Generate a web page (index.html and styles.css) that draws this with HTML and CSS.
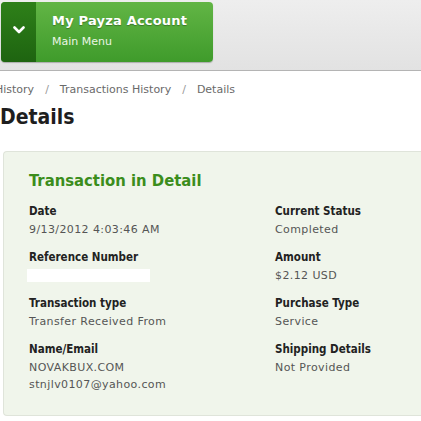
FILE: index.html
```html
<!DOCTYPE html>
<html>
<head>
<meta charset="utf-8">
<link rel="stylesheet" href="styles.css">
</head>
<body>
<header class="topbar">
  <div class="menu-btn">
    <div class="menu-toggle">
      <svg width="12" height="9" viewBox="0 0 12 9"><path d="M1.5 1.5 L6 6 L10.5 1.5" fill="none" stroke="#fff" stroke-width="2.6" stroke-linecap="round" stroke-linejoin="round"/></svg>
    </div>
    <div class="menu-text">
      <div class="menu-title">My Payza Account</div>
      <div class="menu-sub">Main Menu</div>
    </div>
  </div>
</header>
<nav class="crumbs">
  <span>History</span><span class="sep">/</span><span>Transactions History</span><span class="sep">/</span><span>Details</span>
</nav>
<h1 class="page-title">Details</h1>
<section class="card">
  <h2 class="card-title">Transaction in Detail</h2>
  <div class="grid">
    <div class="field">
      <div class="label">Date</div>
      <div class="value">9/13/2012 4:03:46 AM</div>
    </div>
    <div class="field">
      <div class="label">Current Status</div>
      <div class="value">Completed</div>
    </div>
    <div class="field">
      <div class="label">Reference Number</div>
      <div class="value"><span class="redacted"></span></div>
    </div>
    <div class="field">
      <div class="label">Amount</div>
      <div class="value">$2.12 USD</div>
    </div>
    <div class="field">
      <div class="label">Transaction type</div>
      <div class="value">Transfer Received From</div>
    </div>
    <div class="field">
      <div class="label">Purchase Type</div>
      <div class="value">Service</div>
    </div>
    <div class="field">
      <div class="label">Name/Email</div>
      <div class="value">NOVAKBUX.COM</div>
      <div class="value">stnjlv0107@yahoo.com</div>
    </div>
    <div class="field">
      <div class="label">Shipping Details</div>
      <div class="value">Not Provided</div>
    </div>
  </div>
</section>
</body>
</html>
```
FILE: styles.css
```css
html, body {
  margin: 0;
  padding: 0;
  background: #fff;
  overflow: hidden;
}
body {
  width: 421px;
  font-family: "DejaVu Sans", Verdana, sans-serif;
  color: #333;
}
.topbar {
  height: 68px;
  border-bottom: 1px solid #b4b4b4;
  background: linear-gradient(#eeeeee, #e2e2e2);
  padding: 2px 0 0 1px;
  box-sizing: content-box;
}
.menu-btn {
  width: 212px;
  height: 60px;
  display: flex;
  border-radius: 4px;
  overflow: hidden;
  background: linear-gradient(#62b545, #3f9b2b);
  box-shadow: 0 1px 1px rgba(0,0,0,0.25);
}
.menu-toggle {
  width: 35px;
  display: flex;
  align-items: center;
  justify-content: center;
  background: linear-gradient(#2e8019, #1e6410);
  padding-bottom: 3px;
  box-sizing: border-box;
}
.menu-text {
  padding: 11px 0 0 16px;
  color: #fff;
}
.menu-title {
  font-weight: bold;
  font-size: 13px;
  line-height: 16px;
  letter-spacing: 0.2px;
  text-shadow: 0 1px 1px rgba(0,0,0,0.3);
}
.menu-sub {
  font-size: 11px;
  line-height: 14px;
  margin-top: 6px;
  color: #eaf5e4;
}
.crumbs {
  margin: 12px 0 0 -5px;
  font-size: 11px;
  line-height: 14px;
  color: #6a6a6a;
  white-space: nowrap;
}
.crumbs .sep {
  margin: 0 11px;
  color: #999;
}
.page-title {
  margin: 7px 0 0 0;
  font-family: "DejaVu Sans Condensed", "DejaVu Sans", sans-serif;
  font-weight: bold;
  font-size: 21px;
  line-height: 26px;
  color: #1e1e1e;
}
.card {
  margin: 21px 0 0 3px;
  height: 265px;
  box-sizing: border-box;
  border: 1px solid #dfe4da;
  border-right: none;
  border-radius: 4px 0 0 4px;
  background: #f0f5eb;
  padding: 19px 0 0 25px;
}
.card-title {
  margin: 0;
  font-family: "DejaVu Sans Condensed", "DejaVu Sans", sans-serif;
  font-weight: bold;
  font-size: 16.5px;
  line-height: 20px;
  color: #3b8d1c;
}
.grid {
  margin-top: 11px;
  display: grid;
  grid-template-columns: 246px 1fr;
  row-gap: 10px;
}
.label {
  font-family: "DejaVu Sans Condensed", "DejaVu Sans", sans-serif;
  font-weight: bold;
  font-size: 11.5px;
  line-height: 19px;
  color: #222;
}
.value {
  font-size: 11px;
  line-height: 17px;
  color: #555;
  letter-spacing: 0.4px;
}
.redacted {
  display: block;
  width: 123px;
  height: 13px;
  margin: 2px 0 2px -2px;
  background: #fff;
}
```
